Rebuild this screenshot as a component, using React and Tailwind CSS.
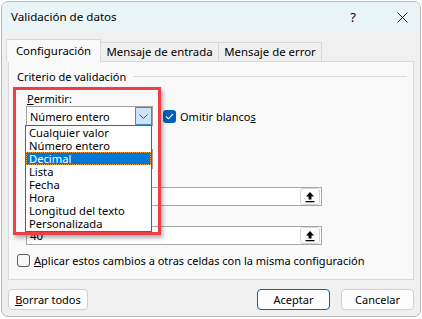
import { useState } from 'react';

const OPTIONS = [
  'Cualquier valor',
  'Número entero',
  'Decimal',
  'Lista',
  'Fecha',
  'Hora',
  'Longitud del texto',
  'Personalizada',
];

function RefButton() {
  return (
    <div className="w-[20px] h-[17px] mr-px rounded-[3px] border border-[#d4d4d4] bg-white flex items-center justify-center">
      <svg width="10" height="12" viewBox="0 0 10 12">
        <path d="M5 1 L9 5.5 L6.5 5.5 L6.5 8.5 L3.5 8.5 L3.5 5.5 L1 5.5 Z" fill="#000" />
        <rect x="0.5" y="10" width="9" height="1.3" fill="#000" />
      </svg>
    </div>
  );
}

function RangeInput({ value }) {
  return (
    <div className="ml-[17px] w-[296px] h-[19px] bg-white border border-[#a8a8a8] flex items-center justify-between">
      <span className="pl-[3px] text-[11.5px]">{value}</span>
      <RefButton />
    </div>
  );
}

export default function App() {
  const [selected] = useState('Decimal');

  return (
    <div
      className="relative w-[422px] h-[319px] bg-white text-[11px] text-black leading-none"
      style={{ fontFamily: '"Noto Sans", "Segoe UI", sans-serif' }}
    >
      {/* ventana */}
      <div className="absolute left-px top-px w-[420px] h-[316px] rounded-[7px] border border-[#b9b9b9] bg-[#f0f0f0] overflow-hidden flex flex-col">
        {/* barra de título */}
        <div className="h-[30px] bg-[#eaf5f7] flex items-center pl-[9px] pr-[12px] shrink-0">
          <span className="text-[11.6px]">Validación de datos</span>
          <span className="ml-auto mr-[41px] text-[13px]">?</span>
          <svg width="11" height="11" viewBox="0 0 11 11">
            <path d="M0.5 0.5 L10.5 10.5 M10.5 0.5 L0.5 10.5" stroke="#1a1a1a" strokeWidth="1" />
          </svg>
        </div>

        {/* pestañas */}
        <div className="flex items-end pl-[4px] pt-[6px] h-[29px] shrink-0 relative z-10">
          <div className="w-[95px] h-[23px] bg-[#f9f9f9] border border-b-0 border-[#d9d9d9] flex items-center justify-center -mb-px pb-px text-[11.4px]">
            Configuración
          </div>
          <div className="w-[118px] h-[19px] border border-l-0 border-b-0 border-[#d9d9d9] flex items-center justify-center text-[11.4px]">
            Mensaje de entrada
          </div>
          <div className="w-[103px] h-[19px] border border-l-0 border-b-0 border-[#d9d9d9] flex items-center justify-center text-[11.4px]">
            Mensaje de error
          </div>
        </div>

        {/* panel */}
        <div className="mx-[6px] h-[219px] bg-[#f9f9f9] border border-[#d9d9d9] flex flex-col shrink-0">
          <div className="flex items-center pl-[8px] pr-[6px] mt-[7px] h-[14px]">
            <span>Criterio de validación</span>
            <div className="flex-1 ml-[7px] h-px bg-[#dcdcdc]" />
          </div>

          <div className="pl-[18px] mt-[8px] h-[14px] flex items-center">
            <span><span className="underline">P</span>ermitir:</span>
          </div>

          <div className="flex items-center mt-px h-[20px]">
            <div className="ml-[17px] w-[127px] h-[20px] bg-white border border-[#a0a0a0] flex items-center justify-between">
              <span className="pl-[3px]">Número entero</span>
              <div className="w-[17px] h-[18px] bg-[#cce4f7] border border-[#3c8fd8] flex items-center justify-center">
                <svg width="9" height="5" viewBox="0 0 9 5">
                  <path d="M0.5 0.5 L4.5 4.5 L8.5 0.5" stroke="#555" strokeWidth="1" fill="none" />
                </svg>
              </div>
            </div>
            <div className="ml-[10px] w-[13px] h-[13px] rounded-[3px] bg-[#005fb8] flex items-center justify-center">
              <svg width="9" height="7" viewBox="0 0 9 7">
                <path d="M1 3.5 L3.4 5.8 L8 1" stroke="#fff" strokeWidth="1.1" fill="none" />
              </svg>
            </div>
            <span className="ml-[4px]">Omitir blanco<span className="underline">s</span></span>
          </div>

          {/* campos tapados por la lista */}
          <div className="mt-[6px] h-[14px]" />
          <div className="ml-[17px] mt-[3px] w-[127px] h-[20px] bg-white border border-[#a0a0a0]" />

          <div className="mt-[2px] h-[14px]" />
          <div className="mt-[2px]">
            <RangeInput value="" />
          </div>
          <div className="mt-[4px] h-[14px]" />
          <div className="mt-[2px]">
            <RangeInput value="40" />
          </div>

          <div className="flex items-center pl-[8px] mt-[8px] h-[14px]">
            <div className="w-[13px] h-[13px] rounded-[3px] border border-[#5a5a5a] bg-[#f9f9f9]" />
            <span className="ml-[4px]">
              <span className="underline">A</span>plicar estos cambios a otras celdas con la misma configuración
            </span>
          </div>
        </div>

        {/* botones */}
        <div className="flex items-center mt-[9px] px-[6px] shrink-0">
          <button className="w-[80px] h-[21px] rounded-[4px] border border-[#d0d0d0] bg-[#fdfdfd] flex items-center justify-center">
            <span><span className="underline">B</span>orrar todos</span>
          </button>
          <button className="ml-auto w-[73px] h-[21px] rounded-[4px] border border-[#0067c0] bg-[#fdfdfd] flex items-center justify-center">
            Aceptar
          </button>
          <button className="ml-[11px] w-[73px] h-[21px] rounded-[4px] border border-[#d0d0d0] bg-[#fdfdfd] flex items-center justify-center">
            Cancelar
          </button>
        </div>
      </div>

      {/* lista desplegable */}
      <div className="absolute left-[25px] top-[125px] w-[127px] h-[107px] bg-white border border-[#5f5f5f] flex flex-col text-[11.2px]">
        {OPTIONS.map((opt) => (
          <div
            key={opt}
            className={
              opt === selected
                ? 'h-[13px] pl-[2px] flex items-center bg-[#0078d7] text-white border border-dotted border-[#f0a040]'
                : 'h-[13px] pl-[3px] flex items-center'
            }
          >
            {opt}
          </div>
        ))}
      </div>

      {/* marco rojo */}
      <div className="absolute left-[13px] top-[87px] w-[148px] h-[148px] border-[3px] border-[#ee3f46] shadow-[2px_3px_4px_rgba(0,0,0,0.3)]" />
    </div>
  );
}
